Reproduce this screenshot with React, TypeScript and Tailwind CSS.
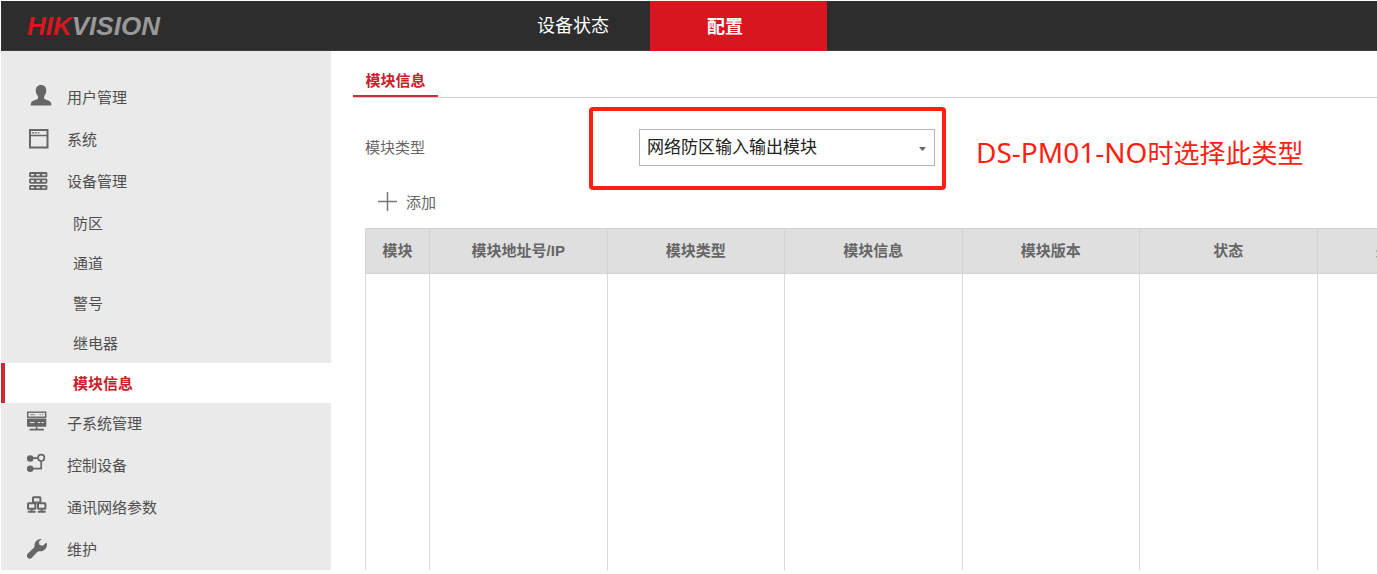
import { useState } from "react";
import type { ReactNode } from "react";
import clsx from "clsx";

interface MenuItem {
  label: string;
  icon: ReactNode;
  children?: string[];
}

const UserIcon = (
  <path
    fill="currentColor"
    d="M15 1c3.300 0 5.300 2.200 5.300 5.600 0 2.200-.8 4-1.900 5.200-.5.600-.6 2.600.2 3.200 1.800 1 4.600 1.500 5.800 2.800.7.800.9 2.200.9 3.700H4.800c0-1.500.2-2.900.9-3.700 1.200-1.300 4-1.800 5.800-2.800.8-.6.700-2.600.2-3.200-1.100-1.200-1.900-3-1.900-5.200C9.800 3.200 11.700 1 15 1z"
  />
);

const WindowIcon = (
  <g fill="none" stroke="currentColor">
    <rect x="4" y="4" width="17.500" height="17.500" strokeWidth="2" />
    <path d="M4 9.500h17.500" strokeWidth="1.500" />
    <path d="M6 6.800h2.200M9 6.800h1.800M11.800 6.800h1.600" strokeWidth="1.300" />
  </g>
);

const RackIcon = (
  <g fill="none" stroke="currentColor">
    {[5, 11.4, 17.8].map((y) => (
      <g key={y}>
        <rect x="4" y={y} width="16.500" height="3.400" rx="0.500" strokeWidth="1.800" />
        <path d={`M9.200 ${y}v3.400M15 ${y}v3.400`} strokeWidth="2.400" />
      </g>
    ))}
  </g>
);

const ServerIcon = (
  <g>
    <rect x="1.700" y="2.200" width="18" height="5" fill="none" stroke="currentColor" strokeWidth="1.400" />
    <path d="M4 4.700h5M13.500 4.700h1.500M16 4.700h1.500" stroke="currentColor" strokeWidth="1" opacity="0.7" />
    <rect x="1" y="8.500" width="19.300" height="8.300" rx="1" fill="currentColor" />
    <path d="M4 12.500h4.500M12 12.500h2.200M15.500 12.500h2.200" stroke="#eaeaea" strokeWidth="1.200" />
    <path d="M10.600 16.500v3M3.500 19.600h14.300" stroke="currentColor" strokeWidth="1.600" />
  </g>
);

const LinkIcon = (
  <g fill="none" stroke="currentColor" strokeWidth="1.700">
    <circle cx="4.200" cy="6.500" r="3.300" fill="currentColor" stroke="none" />
    <circle cx="4.200" cy="16.800" r="3.300" fill="currentColor" stroke="none" />
    <circle cx="15.200" cy="5.800" r="3.200" />
    <path d="M6 6.200h5.800M15.200 9v7.600H6" />
  </g>
);

const NetworkIcon = (
  <g fill="none" stroke="currentColor" strokeWidth="2">
    <rect x="7" y="3.300" width="7.400" height="5.200" rx="0.500" />
    <rect x="2" y="9.300" width="7.400" height="5.500" rx="0.500" />
    <rect x="12" y="9.300" width="7.400" height="5.500" rx="0.500" />
    <path d="M5.700 15v2.500M15.700 15v2.500M1.800 17.800h7.800M11.800 17.800h7.800" />
  </g>
);

const WrenchIcon = (
  <path
    fill="currentColor"
    d="M15.800 3c-4.200-.4-7.600 2.800-7.300 6.800.1 1-.1 1.700-.8 2.300L1.800 17.600c-1.200 1.200-1.200 3 0 4.200s3 1.200 4.100 0l5.400-5.900c.7-.7 1.300-.8 2.300-.7 4.200.5 7.800-3.300 7.300-7.300l-.5-1.400-3.600 3.300-3.200-.8-.8-3.200z"
  />
);

const MENU: MenuItem[] = [
  { label: "用户管理", icon: UserIcon },
  { label: "系统", icon: WindowIcon },
  { label: "设备管理", icon: RackIcon, children: ["防区", "通道", "警号", "继电器", "模块信息"] },
  { label: "子系统管理", icon: ServerIcon },
  { label: "控制设备", icon: LinkIcon },
  { label: "通讯网络参数", icon: NetworkIcon },
  { label: "维护", icon: WrenchIcon },
];

const COLUMNS = ["模块地址号/IP", "模块类型", "模块信息", "模块版本", "状态", "关联防区"];

function Header() {
  return (
    <header className="flex h-[50px] shrink-0 border-b border-[#3d3d3d] bg-[#2d2d2d]">
      <a
        href="#home"
        className="flex w-[495px] shrink-0 items-center pl-[26px] text-[26px] leading-none font-bold italic"
      >
        <span className="text-[#d7171f]">HIK</span>
        <span className="text-[#989898]">VISION</span>
      </a>
      <nav className="flex text-[18px] text-white">
        <a href="#status" className="flex w-[154px] items-center justify-center pt-0.5">
          设备状态
        </a>
        <a
          href="#config"
          className="-mb-px flex w-[177px] items-center bg-[#d7171d] pt-0.5 pl-[57px] font-bold"
        >
          配置
        </a>
      </nav>
    </header>
  );
}

function Sidebar({ active, onSelect }: { active: string; onSelect: (name: string) => void }) {
  return (
    <aside className="w-[330px] shrink-0 overflow-hidden bg-[#eaeaea] pt-[26px] text-[15px] text-[#4f4f4f]">
      <ul>
        {MENU.map((item) => (
          <li key={item.label}>
            <a href="#menu" className="flex h-[42px] items-center gap-[14px] pl-[25px]">
              <svg className="h-7 w-[27px] shrink-0 text-[#666]" viewBox="0 0 27 28" aria-hidden="true">
                {item.icon}
              </svg>
              {item.label}
            </a>
            {item.children && (
              <ul>
                {item.children.map((child) => (
                  <li key={child}>
                    <button
                      type="button"
                      onClick={() => onSelect(child)}
                      className={clsx(
                        "flex h-10 w-full cursor-pointer items-center border-l-4 pt-0.5 pl-[68px]",
                        child === active
                          ? "border-[#cb2a33] bg-white font-bold text-[#c9202b]"
                          : "border-transparent"
                      )}
                    >
                      {child}
                    </button>
                  </li>
                ))}
              </ul>
            )}
          </li>
        ))}
      </ul>
    </aside>
  );
}

function ModuleTable() {
  return (
    <table className="w-[1130px] table-fixed border-collapse text-[15px] text-[#666]">
      <thead>
        <tr className="h-[45px] bg-[#dfdfdf]">
          <th className="w-16 border border-[#d3d3d3] font-bold">模块</th>
          {COLUMNS.map((name) => (
            <th key={name} className="border border-[#d3d3d3] font-bold">
              {name}
            </th>
          ))}
        </tr>
      </thead>
      <tbody>
        <tr className="h-[600px]">
          <td className="border border-[#d9d9d9]" />
          {COLUMNS.map((name) => (
            <td key={name} className="border border-[#d9d9d9]" />
          ))}
        </tr>
      </tbody>
    </table>
  );
}

export default function App() {
  const [active, setActive] = useState("模块信息");

  return (
    <div className="flex h-screen flex-col overflow-hidden bg-white pt-px pb-1 pl-px font-['Liberation_Sans','Noto_Sans_CJK_SC',sans-serif]">
      <Header />
      <div className="flex min-h-0 grow">
        <Sidebar active={active} onSelect={setActive} />
        <main className="min-w-0 grow overflow-hidden pl-[22px] text-[15px] text-[#666]">
          <div className="flex h-[47px] border-b border-[#cfcfcf]">
            <button
              type="button"
              className="h-[46px] w-[85px] border-b-2 border-[#c9303a] pt-4 font-bold text-[#c9202b]"
            >
              模块信息
            </button>
          </div>

          <div className="pl-3">
            <div className="flex items-center pt-[9px]">
              <label htmlFor="module-type" className="w-[224px] shrink-0">
                模块类型
              </label>
              {/* highlighted field */}
              <div className="flex h-[83px] w-[357px] shrink-0 items-center rounded-[4px] border-4 border-[#ff1e12] pb-0.5 pl-[46px]">
                <div className="relative w-[296px]">
                  <select
                    id="module-type"
                    className="h-[37px] w-full appearance-none border border-[#b5b5b5] bg-white pl-[7px] text-[17px] text-[#222] outline-none"
                  >
                    <option>网络防区输入输出模块</option>
                  </select>
                  <svg
                    className="pointer-events-none absolute top-[18px] right-[9px] h-1 w-[7px] text-[#666]"
                    viewBox="0 0 7 4"
                    aria-hidden="true"
                  >
                    <path d="M0 0h7L3.500 4z" fill="currentColor" />
                  </svg>
                </div>
              </div>
              <p className="pt-2 pl-[30px] text-[26px] whitespace-nowrap text-[#ff1e12]">
                <span className="font-['Noto_Sans',sans-serif] text-[28px]">DS-PM01-NO</span>时选择此类型
              </p>
            </div>

            <button type="button" className="flex h-[26px] cursor-pointer items-center gap-[9px] pl-[13px]">
              <svg className="mb-1 h-[19px] w-[19px] text-[#777]" viewBox="0 0 19 19" aria-hidden="true">
                <path d="M9.500 0v19M0 9.500h19" stroke="currentColor" strokeWidth="1.500" />
              </svg>
              添加
            </button>

            <div className="pt-3">
              <ModuleTable />
            </div>
          </div>
        </main>
      </div>
    </div>
  );
}
